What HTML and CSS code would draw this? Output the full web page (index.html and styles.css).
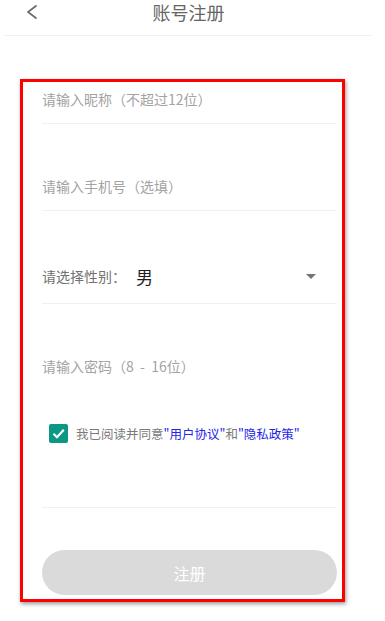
FILE: index.html
```html
<!DOCTYPE html>
<html lang="zh">
<head>
<meta charset="utf-8">
<title>账号注册</title>
<link rel="stylesheet" href="styles.css">
</head>
<body>
<header class="topbar">
  <svg class="back" width="12" height="16" viewBox="0 0 12 16"><polyline points="10.5,1.5 2,8 10.5,14.5" fill="none" stroke="#666" stroke-width="1.6"/></svg>
  <h1 class="title">账号注册</h1>
</header>
<main class="form">
  <div class="row row-first line"><span class="ph">请输入昵称（不超过12位）</span></div>
  <div class="row row-phone line"><span class="ph">请输入手机号（选填）</span></div>
  <div class="row row-gender line">
    <span class="label">请选择性别：</span>
    <span class="value">男</span>
    <span class="caret"></span>
  </div>
  <div class="row row-pwd"><span class="ph">请输入密码（8 &nbsp;- &nbsp;16位）</span></div>
  <div class="agree">
    <span class="check"><svg width="19" height="19" viewBox="0 0 19 19"><polyline points="4.5,9.8 8,13.2 14.8,5.8" fill="none" stroke="#fff" stroke-width="2.2"/></svg></span>
    <span class="agree-text">我已阅读并同意<span class="link">"用户协议"</span>和<span class="link">"隐私政策"</span></span>
  </div>
  <div class="divider"></div>
  <button class="submit">注册</button>
</main>
</body>
</html>
```
FILE: styles.css
```css
* { box-sizing: border-box; }
html, body { margin: 0; padding: 0; background: #fff; }
body {
  width: 385px;
  height: 621px;
  overflow: hidden;
  font-family: "Noto Sans CJK SC", "Noto Sans", sans-serif;
}
.topbar {
  position: relative;
  display: flex;
  align-items: center;
  justify-content: center;
  height: 36px;
  padding-bottom: 11px;
  margin: 0 13px 0 5px;
  border-bottom: 1px solid #f1f1f1;
}
.back {
  position: absolute;
  left: 21px;
  top: 4px;
}
.title {
  margin: 0;
  font-size: 18px;
  font-weight: normal;
  color: #666;
  line-height: 25px;
}
.form {
  margin: 43px 0 0 20px;
  width: 325px;
  height: 523px;
  border: 3px solid #ff0000;
  box-shadow: 1px 2px 4px rgba(0,0,0,0.4);
  padding: 0 5px 0 19px;
  display: flex;
  flex-direction: column;
}
.row {
  display: flex;
  align-items: center;
  font-size: 14px;
}
.line { border-bottom: 1px solid #f0f0f0; }
.ph { color: #a3a3a3; }
.row-first { height: 42px; padding-bottom: 8px; }
.row-phone { height: 49px; margin-top: 38px; }
.row-gender { height: 55px; margin-top: 38px; }
.row-pwd { height: 48px; margin-top: 38px; }
.label { color: #727272; }
.value { color: #1e1e1e; font-size: 17px; margin-left: 10px; }
.caret {
  margin-left: auto;
  margin-right: 21px;
  width: 0;
  height: 0;
  border-left: 5px solid transparent;
  border-right: 5px solid transparent;
  border-top: 5px solid #757575;
}
.agree {
  display: flex;
  align-items: center;
  margin-top: 34px;
  margin-left: 7px;
  height: 19px;
}
.check {
  width: 19px;
  height: 19px;
  background: #0a9783;
  border-radius: 2px;
  display: flex;
}
.agree-text {
  margin-left: 8px;
  font-size: 12.5px;
  color: #7a7a7a;
}
.link { color: #2424e8; }
.divider {
  margin-top: 64px;
  height: 1px;
  background: #f0f0f0;
}
.submit {
  margin-top: 42px;
  height: 45px;
  border: none;
  border-radius: 23px;
  background: #dadada;
  color: #fff;
  font-family: inherit;
  font-size: 16px;
  padding: 0;
}
```
